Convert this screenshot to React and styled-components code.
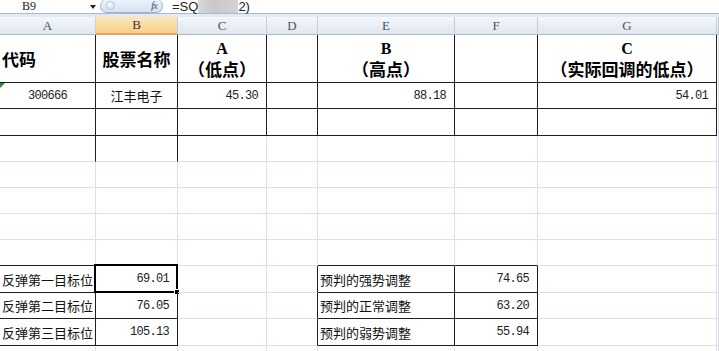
import React from 'react';
import styled, { createGlobalStyle, css } from 'styled-components';

const GlobalStyle = createGlobalStyle`
  html, body {
    margin: 0;
    padding: 0;
    background: #ffffff;
    overflow: hidden;
  }
`;

const COLS = [96, 82, 89, 51, 137, 83, 179, 2];
const ROWS = [48, 26, 27, 26, 26, 26, 26, 26, 27, 26, 27, 26];

const DARK = '#1e1e1e';
const GRID = '#dbe0ec';
const CJK = '"Noto Sans CJK SC", "Noto Sans", sans-serif';
const MONO = '"Liberation Mono", "DejaVu Sans Mono", monospace';

const Sheet = styled.div`
  width: 719px;
  height: 351px;
  overflow: hidden;
  background: #fff;
`;

// 편집줄 (name box + fx + formula)
const FormulaBar = styled.div`
  display: flex;
  align-items: stretch;
  height: 13px;
  border-bottom: 1px solid #a7b8cf;
  background: #fff;
`;

const NameBox = styled.div`
  width: 100px;
  display: flex;
  align-items: center;
  justify-content: space-between;
  padding: 0 4px 0 22px;
  box-sizing: border-box;
  font-family: "Liberation Serif", serif;
  font-size: 12px;
  color: #222;
`;

const Arrow = styled.span`
  width: 0;
  height: 0;
  border-left: 3px solid transparent;
  border-right: 3px solid transparent;
  border-top: 4px solid #222;
`;

const FxPill = styled.div`
  width: 63px;
  display: flex;
  align-items: center;
  justify-content: space-between;
  padding: 0 4px 0 5px;
  box-sizing: border-box;
  border: 1px solid #9db2cc;
  border-top: none;
  border-radius: 7px;
  margin-top: -1px;
  background: linear-gradient(#eef4fb, #d6e2f0);
`;

const Knob = styled.span`
  width: 7px;
  height: 7px;
  border-radius: 50%;
  background: radial-gradient(circle at 35% 35%, #ffffff, #c7d6e8);
  border: 1px solid #b7c8dd;
`;

const Fx = styled.span`
  font-family: "Liberation Serif", serif;
  font-style: italic;
  font-size: 11px;
  line-height: 11px;
  padding-right: 1px;
  color: #4a5a70;
  letter-spacing: -1px;
`;

const FormulaText = styled.div`
  display: flex;
  align-items: center;
  padding-left: 9px;
  font-family: "Liberation Sans", sans-serif;
  font-size: 13px;
  color: #222;
`;

const Blur = styled.span`
  display: inline-block;
  width: 40px;
  height: 14px;
  margin-top: -1px;
  background: linear-gradient(90deg, #d8d8d8, #c9c9c9 40%, #d2d2d2);
`;

const HeaderGap = styled.div`
  height: 3px;
  background: #e3eaf4;
`;

const ColHeaders = styled.div`
  display: grid;
  grid-template-columns: ${COLS.map((w) => w + 'px').join(' ')};
  height: 18px;
`;

const ColHead = styled.div`
  display: flex;
  align-items: center;
  justify-content: center;
  box-sizing: border-box;
  border-right: 1px solid #c3cedd;
  border-bottom: 1px solid #a9b8cc;
  font-family: "Liberation Serif", serif;
  font-size: 13px;
  color: #4a5260;
  background: linear-gradient(#f4f7fb, #dfe6f0);
  ${(p) =>
    p.$active &&
    css`
      background: linear-gradient(#fbe7bf, #f7cf8a);
      border-bottom: 2px solid #f2a04a;
      color: #333;
    `}
`;

const Body = styled.div`
  display: grid;
  grid-template-columns: ${COLS.map((w) => w + 'px').join(' ')};
  grid-template-rows: ${ROWS.map((h) => h + 'px').join(' ')};
`;

const Cell = styled.div`
  position: relative;
  box-sizing: border-box;
  display: flex;
  flex-direction: column;
  justify-content: center;
  align-items: ${(p) => (p.$align === 'right' ? 'flex-end' : p.$align === 'left' ? 'flex-start' : 'center')};
  padding: ${(p) => (p.$align === 'right' ? '0 8px 0 0' : p.$align === 'left' ? '0 0 0 2px' : '0')};
  border-right: 1px solid ${(p) => (p.$r ? DARK : GRID)};
  border-bottom: 1px solid ${(p) => (p.$b ? DARK : GRID)};
  white-space: nowrap;
  color: #111;
  ${(p) =>
    p.$flag &&
    css`
      &::before {
        content: '';
        position: absolute;
        left: 0;
        top: 0;
        border-top: 5px solid #1f8a2c;
        border-right: 5px solid transparent;
      }
    `}
`;

const HeadText = styled.div`
  font-family: ${CJK};
  font-weight: 700;
  font-size: 17px;
  line-height: 21px;
  color: #000;
`;

const Letter = styled.div`
  font-family: "Liberation Serif", serif;
  font-weight: 700;
  font-size: 16px;
  line-height: 19px;
  color: #000;
`;

const Num = styled.span`
  font-family: ${MONO};
  font-size: 12px;
  letter-spacing: -0.7px;
  color: #222;
`;

const Label = styled.span`
  font-family: ${CJK};
  font-size: 13px;
  color: #111;
`;

const Selection = styled.div`
  position: absolute;
  left: -2px;
  top: -2px;
  right: -1px;
  bottom: -1px;
  border: 2px solid #000;
  pointer-events: none;

  &::after {
    content: '';
    position: absolute;
    right: -4px;
    bottom: -4px;
    width: 4px;
    height: 4px;
    background: #000;
    border: 1px solid #fff;
  }
`;

const E = {};
const dk = { r: true, b: true };

const rows = [
  [
    { ...dk, align: 'left', head: ['代码'] },
    { ...dk, head: ['股票名称'] },
    { ...dk, letter: 'A', head: ['（低点）'] },
    dk,
    { ...dk, letter: 'B', head: ['（高点）'] },
    dk,
    { ...dk, letter: 'C', head: ['（实际回调的低点）'] },
    E,
  ],
  [
    { ...dk, num: '300666', flag: true },
    { ...dk, label: '江丰电子' },
    { ...dk, align: 'right', num: '45.30' },
    dk,
    { ...dk, align: 'right', num: '88.18' },
    dk,
    { ...dk, align: 'right', num: '54.01' },
    E,
  ],
  [dk, dk, dk, dk, dk, dk, dk, E],
  [{ r: true }, { r: true }, E, E, E, E, E, E],
  [E, E, E, E, E, E, E, E],
  [E, E, E, E, E, E, E, E],
  [E, E, E, E, E, E, E, E],
  [{ b: true }, { b: true }, E, E, { b: true }, { b: true }, E, E],
  [
    { ...dk, align: 'left', label: '反弹第一目标位' },
    { ...dk, align: 'right', num: '69.01', selected: true },
    E,
    { r: true },
    { ...dk, align: 'left', label: '预判的强势调整' },
    { ...dk, align: 'right', num: '74.65' },
    E,
    E,
  ],
  [
    { ...dk, align: 'left', label: '反弹第二目标位' },
    { ...dk, align: 'right', num: '76.05' },
    E,
    { r: true },
    { ...dk, align: 'left', label: '预判的正常调整' },
    { ...dk, align: 'right', num: '63.20' },
    E,
    E,
  ],
  [
    { ...dk, align: 'left', label: '反弹第三目标位' },
    { ...dk, align: 'right', num: '105.13' },
    E,
    { r: true },
    { ...dk, align: 'left', label: '预判的弱势调整' },
    { ...dk, align: 'right', num: '55.94' },
    E,
    E,
  ],
  [E, E, E, E, E, E, E, E],
];

const letters = ['A', 'B', 'C', 'D', 'E', 'F', 'G', ''];

export default function App() {
  return (
    <Sheet>
      <GlobalStyle />
      <FormulaBar>
        <NameBox>
          B9
          <Arrow />
        </NameBox>
        <FxPill>
          <Knob />
          <Fx>fx</Fx>
        </FxPill>
        <FormulaText>
          =SQ<Blur />2)
        </FormulaText>
      </FormulaBar>
      <HeaderGap />
      <ColHeaders>
        {letters.map((l, i) => (
          <ColHead key={i} $active={l === 'B'}>
            {l}
          </ColHead>
        ))}
      </ColHeaders>
      <Body>
        {rows.map((row, ri) =>
          row.map((c, ci) => (
            <Cell
              key={ri + '-' + ci}
              $r={c.r}
              $b={c.b}
              $align={c.align}
              $flag={c.flag}
            >
              {c.letter && <Letter>{c.letter}</Letter>}
              {c.head && c.head.map((t) => <HeadText key={t}>{t}</HeadText>)}
              {c.num && <Num>{c.num}</Num>}
              {c.label && <Label>{c.label}</Label>}
              {c.selected && <Selection />}
            </Cell>
          ))
        )}
      </Body>
    </Sheet>
  );
}
